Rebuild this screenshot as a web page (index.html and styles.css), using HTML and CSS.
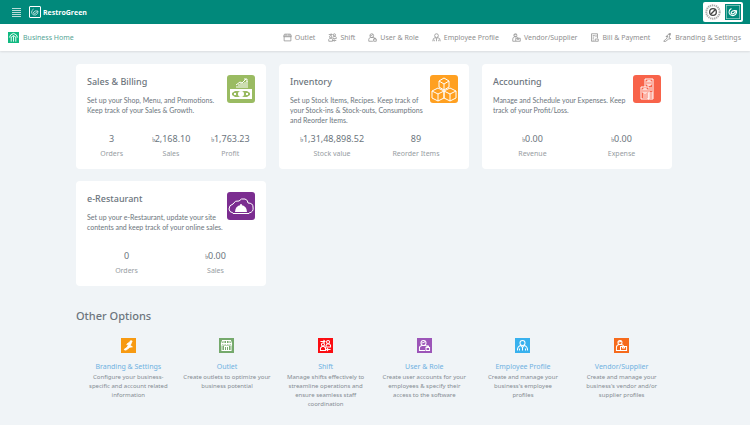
FILE: index.html
```html
<!DOCTYPE html>
<html lang="en">
<head>
  <meta charset="UTF-8" />
  <meta name="viewport" content="width=device-width, initial-scale=1.0"/>
  <title>RestroGreen - Business Home</title>
  <link rel="stylesheet" href="styles.css">
</head>
<body>
  <!-- shared line icons -->
  <svg class="sprite" aria-hidden="true">
    <symbol id="shop" viewBox="0 0 24 24">
      <path d="M4 2h16l2 6v3H2V8zM2 8h20M7 2v9M12 2v9M17 2v9M3 11v11h18V11M8 22v-8h8v8M12 14v8"/>
    </symbol>
    <symbol id="outlet" viewBox="0 0 24 24">
      <path d="M4 3h16l2 5v2H2V8zM2 8h20M3 10v11h18V10M8 3v4M16 3v4"/>
    </symbol>
    <symbol id="shift" viewBox="0 0 24 24">
      <circle cx="7" cy="10" r="3"/><circle cx="17" cy="5" r="3"/>
      <path d="M2 22v-5l3-3h4l3 3v5zM13 15v-3l2-3h5l2 3v3zM2 4h9M8 1l3 3-3 3M22 20h-8M17 17l-3 3 3 3"/>
    </symbol>
    <symbol id="user" viewBox="0 0 24 24">
      <circle cx="10" cy="7" r="5"/>
      <path d="M6 7q5 0 7-3M13 22H2v-5q0-4 5-5h6q4 0 5 3M15 16h7v6h-7zM17 16v-2q2-3 3 0v2"/>
    </symbol>
    <symbol id="employee" viewBox="0 0 24 24">
      <circle cx="12" cy="7" r="5"/>
      <path d="M2 22q0-9 7-10l3 4 3-4q7 1 7 10M12 16v6M6 18v4M18 18v4"/>
    </symbol>
    <symbol id="vendor" viewBox="0 0 24 24">
      <circle cx="9" cy="6" r="4"/>
      <path d="M5 5q5 0 7-2M10 22H2v-6q0-5 5-6h4q4 0 5 3M10 14h12v8H10zM14 14v3h4v-3"/>
    </symbol>
    <symbol id="bill" viewBox="0 0 24 24">
      <path d="M20 14V2H4v20h9M7 7h6M7 11h4M7 15h3M7 19h3M16 5v6M14 16h8v6h-8z"/>
    </symbol>
    <symbol id="branding" viewBox="0 0 24 24">
      <path d="M2 21l7-5 4-8-5 2 1-2 6-4 4 1-3 7 5 3-6 1-9 7-4-1zM16 1h4v3h-4z"/>
    </symbol>
    <symbol id="leaf" viewBox="0 0 24 24">
      <path d="M8 3q-8 4-6 12 3 8 12 6 8-3 7-12-10-2-13 3-2 5 3 5 4-1 8-7"/>
    </symbol>
  </svg>

  <header class="topbar">
    <button class="menu-btn" aria-label="Menu"><span></span><span></span><span></span><span></span><span></span></button>
    <a class="brand" href="#">
      <svg class="brand-logo" viewBox="0 0 24 24"><rect x="1" y="1" width="22" height="22" rx="1"/><use href="#leaf" x="4" y="4" width="16" height="16"/></svg>
      RestroGreen
    </a>
    <div class="account">
      <svg class="stamp" viewBox="0 0 24 24">
        <circle class="stamp-ring" cx="12" cy="12" r="10"/>
        <circle class="stamp-line" cx="12" cy="12" r="5"/>
        <path class="stamp-line" d="M9 15l7-7"/>
      </svg>
      <svg class="tile-logo" viewBox="0 0 24 24"><rect class="tile-fill" width="24" height="24"/><rect class="tile-line" x="2" y="2" width="20" height="20"/><use href="#leaf" x="5" y="5" width="14" height="14"/></svg>
    </div>
  </header>

  <nav class="navbar">
    <a class="home-link" href="#">
      <svg viewBox="0 0 24 24"><rect width="24" height="24"/><path d="M3 12l3-6 6-3 6 3 3 6M7 21V10M17 21V10M12 21V9M7 12l5-5 5 5"/></svg>
      Business Home
    </a>
    <div class="nav-links">
      <a href="#"><svg class="line-icon"><use href="#outlet"/></svg>Outlet</a>
      <a href="#"><svg class="line-icon"><use href="#shift"/></svg>Shift</a>
      <a href="#"><svg class="line-icon"><use href="#user"/></svg>User &amp; Role</a>
      <a href="#"><svg class="line-icon"><use href="#employee"/></svg>Employee Profile</a>
      <a href="#"><svg class="line-icon"><use href="#vendor"/></svg>Vendor/Supplier</a>
      <a href="#"><svg class="line-icon"><use href="#bill"/></svg>Bill &amp; Payment</a>
      <a href="#"><svg class="line-icon"><use href="#branding"/></svg>Branding &amp; Settings</a>
    </div>
  </nav>

  <main class="content">
    <section class="cards">
      <article class="card">
        <div class="card-top">
          <div class="card-text">
            <h2>Sales &amp; Billing</h2>
            <p>Set up your Shop, Menu, and Promotions.<br>Keep track of your Sales &amp; Growth.</p>
          </div>
          <svg class="card-icon green" viewBox="0 0 28 28">
            <path class="solid" fill-rule="evenodd" d="M3 14h22v10H3zM5 16v6h18v-6z"/>
            <circle class="solid" cx="14" cy="19" r="3"/>
            <path class="solid" d="M5 16h3l-3 2zM5 22h3l-3-2zM23 16h-3l3 2zM23 22h-3l3-2zM7 18h2v2H7zM19 18h2v2h-2z"/>
            <path d="M10 13v-2M12 13v-4M14 13V8M16 13V8M18 13V7M20 13V6M9 10l4-3 2 1 4-4M17 4h3v3"/>
          </svg>
        </div>
        <dl class="stats">
          <div><dt>Orders</dt><dd>3</dd></div>
          <div><dt>Sales</dt><dd><span class="taka">৳</span>2,168.10</dd></div>
          <div><dt>Profit</dt><dd><span class="taka">৳</span>1,763.23</dd></div>
        </dl>
      </article>

      <article class="card">
        <div class="card-top">
          <div class="card-text">
            <h2>Inventory</h2>
            <p>Set up Stock Items, Recipes. Keep track of<br>your Stock-ins &amp; Stock-outs, Consumptions<br>and Reorder Items.</p>
          </div>
          <svg class="card-icon orange" viewBox="0 0 28 28">
            <path d="M14 3l5 3v6l-5 3-5-3V6zM9 6l5 3 5-3M14 9v6M8 13l6 3v7l-6 3-6-3v-7zM2 16l6 3 6-3M8 19v7M20 13l6 3v7l-6 3-6-3v-7zM14 16l6 3 6-3M20 19v7"/>
          </svg>
        </div>
        <dl class="stats stats-inset">
          <div><dt>Stock value</dt><dd><span class="taka">৳</span>1,31,48,898.52</dd></div>
          <div><dt>Reorder Items</dt><dd>89</dd></div>
        </dl>
      </article>

      <article class="card">
        <div class="card-top">
          <div class="card-text">
            <h2>Accounting</h2>
            <p>Manage and Schedule your Expenses. Keep<br>track of your Profit/Loss.</p>
          </div>
          <svg class="card-icon red" viewBox="0 0 28 28">
            <path d="M12 12V4h8v14M14 6h4v4h-4zM16 5v6M8 12h8v12H8zM10 14h4v4h-4zM12 13v6M10 20h4M10 22h4M15 18h5v6h-5zM15 20h5M15 22h5M18 12v4"/>
          </svg>
        </div>
        <dl class="stats">
          <div><dt>Revenue</dt><dd><span class="taka">৳</span>0.00</dd></div>
          <div><dt>Expense</dt><dd><span class="taka">৳</span>0.00</dd></div>
        </dl>
      </article>

      <article class="card">
        <div class="card-top">
          <div class="card-text">
            <h2>e-Restaurant</h2>
            <p>Set up your e-Restaurant, update your site<br>contents and keep track of your online sales.</p>
          </div>
          <svg class="card-icon purple" viewBox="0 0 28 28">
            <path d="M6 21q-4-1-4-4 0-4 4-5 2-4 6-3 2-3 6-2 3 1 3 4 5 0 5 4 1 5-4 6"/>
            <path class="solid" d="M8 20q0-6 6-7 6 1 6 7zM6 21h16v1H6z"/><circle class="solid" cx="14" cy="13" r="1"/>
          </svg>
        </div>
        <dl class="stats">
          <div><dt>Orders</dt><dd>0</dd></div>
          <div><dt>Sales</dt><dd><span class="taka">৳</span>0.00</dd></div>
        </dl>
      </article>
    </section>

    <h2 class="section-title">Other Options</h2>
    <section class="options">
      <div class="option">
        <svg class="option-icon amber filled" viewBox="0 0 32 32"><use href="#branding" x="5" y="5" width="22" height="22"/></svg>
        <a href="#">Branding &amp; Settings</a>
        <p>Configure your business-specific and account related information</p>
      </div>
      <div class="option">
        <svg class="option-icon leaf-green" viewBox="0 0 32 32"><use href="#shop" x="3" y="3" width="26" height="26"/></svg>
        <a href="#">Outlet</a>
        <p>Create outlets to optimize your business potential</p>
      </div>
      <div class="option">
        <svg class="option-icon bright-red" viewBox="0 0 32 32"><use href="#shift" x="3" y="3" width="26" height="26"/></svg>
        <a href="#">Shift</a>
        <p>Manage shifts effectively to streamline operations and ensure seamless staff coordination</p>
      </div>
      <div class="option">
        <svg class="option-icon violet" viewBox="0 0 32 32"><use href="#user" x="3" y="3" width="26" height="26"/></svg>
        <a href="#">User &amp; Role</a>
        <p>Create user accounts for your employees &amp; specify their access to the software</p>
      </div>
      <div class="option">
        <svg class="option-icon sky" viewBox="0 0 32 32"><use href="#employee" x="3" y="3" width="26" height="26"/></svg>
        <a href="#">Employee Profile</a>
        <p>Create and manage your<br>business's employee<br>profiles</p>
      </div>
      <div class="option">
        <svg class="option-icon deep-orange" viewBox="0 0 32 32"><use href="#vendor" x="3" y="3" width="26" height="26"/></svg>
        <a href="#">Vendor/Supplier</a>
        <p>Create and manage your business's vendor and/or supplier profiles</p>
      </div>
    </section>
  </main>
</body>
</html>
```
FILE: styles.css
```css
* {
  box-sizing: border-box;
}

body {
  margin: 0;
  background-color: #f0f4f7;
  color: #6c757d;
  font-family: 'Segoe UI', 'Noto Sans', sans-serif;
  font-size: 7px;
}

a {
  color: inherit;
  text-decoration: none;
}

h2, p, dl, dd {
  margin: 0;
}

svg {
  fill: none;
  stroke: currentColor;
  flex-shrink: 0;
}

.sprite {
  display: none;
}

/* top bar */
.topbar {
  display: flex;
  align-items: center;
  height: 24px;
  padding: 0 7px 0 12px;
  background-color: #01897b;
  color: #ffffff;
}

.menu-btn {
  display: flex;
  flex-direction: column;
  gap: 1px;
  width: 9px;
  margin-right: 8px;
  padding: 0;
  border: none;
  background: none;
  cursor: pointer;
}

.menu-btn span {
  height: 1px;
  background-color: #b9dcd8;
}

.brand {
  display: flex;
  align-items: center;
  gap: 2px;
  font-family: 'Open Sans', sans-serif;
  font-weight: 700;
}

.brand-logo {
  width: 12px;
  height: 12px;
  stroke-width: 2;
}

.account {
  display: flex;
  align-items: center;
  gap: 4px;
  margin-left: auto;
  padding: 2px;
  border-radius: 2px;
  background-color: #ffffff;
}

.account svg {
  width: 16px;
  height: 16px;
}

.stamp-ring {
  stroke: #aaaaaa;
  stroke-width: 3;
  stroke-dasharray: 2 1;
}

.stamp-line {
  stroke: #444444;
  stroke-width: 2;
}

.tile-fill {
  fill: #01897b;
  stroke: none;
}

.tile-line {
  stroke: #a5d3ce;
  stroke-width: 1;
}

.tile-logo {
  stroke-width: 3;
}

/* navigation */
.navbar {
  display: flex;
  align-items: center;
  height: 27px;
  padding: 0 9px 0 8px;
  background-color: #ffffff;
  box-shadow: 0 1px 2px rgba(0, 0, 0, 0.1);
}

.home-link {
  display: flex;
  align-items: center;
  gap: 4px;
  color: #56a596;
}

.home-link svg {
  width: 11px;
  height: 11px;
  fill: #10b981;
  stroke: none;
}

.home-link path {
  fill: none;
  stroke: #ffffff;
  stroke-width: 2;
}

.nav-links {
  display: flex;
  gap: 13px;
  margin-left: auto;
  color: #8f8f8f;
}

.nav-links a {
  display: flex;
  align-items: center;
  gap: 3px;
}

.line-icon {
  width: 9px;
  height: 9px;
  stroke-width: 2;
}

/* cards */
.content {
  padding: 13px 78px 0 76px;
}

.cards {
  display: grid;
  grid-template-columns: repeat(3, 1fr);
  gap: 12px 13px;
}

.card {
  display: flex;
  flex-direction: column;
  justify-content: space-between;
  min-height: 105px;
  padding: 11px 11px 10px;
  border-radius: 4px;
  background-color: #ffffff;
}

.card-top {
  display: flex;
  justify-content: space-between;
}

.card-text {
  width: 138px;
}

.card h2 {
  margin-bottom: 7px;
  font-size: 9px;
  font-weight: 500;
  line-height: 13px;
}

.card p {
  font-family: 'Segoe UI', Lato, sans-serif;
  line-height: 10px;
  white-space: nowrap;
}

.card-icon {
  width: 28px;
  height: 28px;
  border-radius: 3px;
  color: #ffffff;
}

.solid {
  fill: #ffffff;
  stroke: none;
}

.green { background-color: #9abb62; }
.orange { background-color: #ffa021; }
.red { background-color: #f8634a; }
.purple { background-color: #7b2d90; }

.stats {
  display: flex;
  margin: 0 -5px;
}

.stats-inset {
  margin: 0;
}

.stats div {
  display: flex;
  flex: 1;
  flex-direction: column-reverse;
  align-items: center;
  gap: 4px;
  line-height: 11px;
}

.stats dd {
  height: 11px;
  font-size: 9px;
  white-space: nowrap;
}

.taka {
  font-size: 7px;
  line-height: 1;
}

.stats dt {
  color: #969ca2;
}

/* other options */
.section-title {
  margin: 22px 0 14px;
  font-size: 11px;
  font-weight: 500;
  line-height: 16px;
}

.options {
  display: grid;
  grid-template-columns: repeat(6, 1fr);
  padding: 0 1px 0 3px;
}

.option {
  display: flex;
  flex-direction: column;
  align-items: center;
  text-align: center;
}

.option-icon {
  width: 15px;
  height: 15px;
  margin-bottom: 8px;
  color: #ffffff;
  stroke-width: 2;
}

.option a {
  color: #6fb1e1;
  line-height: 11px;
}

.option p {
  width: 90px;
  margin-top: 1px;
  color: #858c93;
  font-size: 6px;
  line-height: 9px;
}

.filled { fill: #ffffff; }
.amber { background-color: #f79a12; }
.leaf-green { background-color: #75a96c; }
.bright-red { background-color: #fb0d12; }
.violet { background-color: #9c55b8; }
.sky { background-color: #38b1ee; }
.deep-orange { background-color: #f66a1c; }
```
